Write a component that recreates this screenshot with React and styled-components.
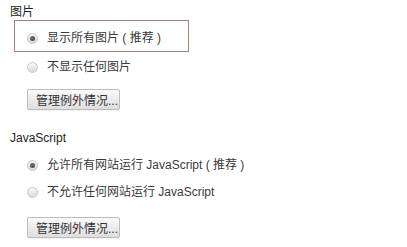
import React from "react";
import styled, { createGlobalStyle } from "styled-components";

const GlobalStyle = createGlobalStyle`
  html, body {
    margin: 0;
    padding: 0;
    background: #ffffff;
  }
  body {
    font-family: "Liberation Sans", Arial, "Noto Sans CJK SC", sans-serif;
    font-size: 12px;
    color: #333333;
  }
`;

const Page = styled.div`
  width: 407px;
  height: 247px;
  padding: 4px 0 0 10px;
  box-sizing: border-box;
  overflow: hidden;
`;

const Section = styled.section`
  display: flex;
  flex-direction: column;
  margin-bottom: ${(p) => p.$gap || 0}px;
`;

const Heading = styled.h3`
  margin: 0;
  font-size: 12px;
  font-weight: normal;
  line-height: 16px;
  height: 16px;
  color: #222;
`;

const Option = styled.label`
  display: flex;
  align-items: center;
  box-sizing: border-box;
  margin-left: 4px;
  width: 175px;
  height: ${(p) => p.$height || 29}px;
  padding-left: ${(p) => (p.$focused ? 12 : 13)}px;
  border: ${(p) => (p.$focused ? "1px solid #b07a7a" : "none")};
  padding-top: ${(p) => p.$shift || 0}px;
  white-space: nowrap;
`;

const Radio = styled.span`
  position: relative;
  width: 11px;
  height: 11px;
  border-radius: 50%;
  box-sizing: border-box;
  border: 1px solid #c8c8c8;
  background: linear-gradient(#f8f8f8, #dadada);
  margin-right: 9px;
  flex-shrink: 0;

  &::after {
    content: "";
    display: ${(p) => (p.$checked ? "block" : "none")};
    position: absolute;
    left: 2px;
    top: 2px;
    width: 5px;
    height: 5px;
    border-radius: 50%;
    background: radial-gradient(circle at 40% 40%, #777, #333);
  }
`;

const Text = styled.span`
  font-size: 12px;
  line-height: 14px;
  color: #3a3a3a;
`;

const Button = styled.button`
  margin-left: 17px;
  margin-top: ${(p) => p.$top || 0}px;
  width: 93px;
  height: 21px;
  padding: 0 0 0 8px;
  text-align: left;
  font-family: "Liberation Sans", Arial, "Noto Sans CJK SC", sans-serif;
  font-size: 12px;
  color: #333;
  border: 1px solid #bcbcbc;
  border-radius: 2px;
  background: linear-gradient(#fafafa, #dedede);
  box-shadow: 0 1px 0 rgba(0, 0, 0, 0.05);
`;

export default function App() {
  return (
    <>
      <GlobalStyle />
      <Page>
        <Section $gap={20}>
          <Heading>图片</Heading>
          <Option $focused $height={32} $shift={4}>
            <Radio $checked />
            <Text>显示所有图片 ( 推荐 )</Text>
          </Option>
          <Option $height={30}>
            <Radio />
            <Text>不显示任何图片</Text>
          </Option>
          <Button $top={7}>管理例外情况...</Button>
        </Section>
        <Section>
          <Heading>JavaScript</Heading>
          <Option $height={32} $shift={6}>
            <Radio $checked />
            <Text>允许所有网站运行 JavaScript ( 推荐 )</Text>
          </Option>
          <Option $height={28}>
            <Radio />
            <Text>不允许任何网站运行 JavaScript</Text>
          </Option>
          <Button $top={11}>管理例外情况...</Button>
        </Section>
      </Page>
    </>
  );
}
